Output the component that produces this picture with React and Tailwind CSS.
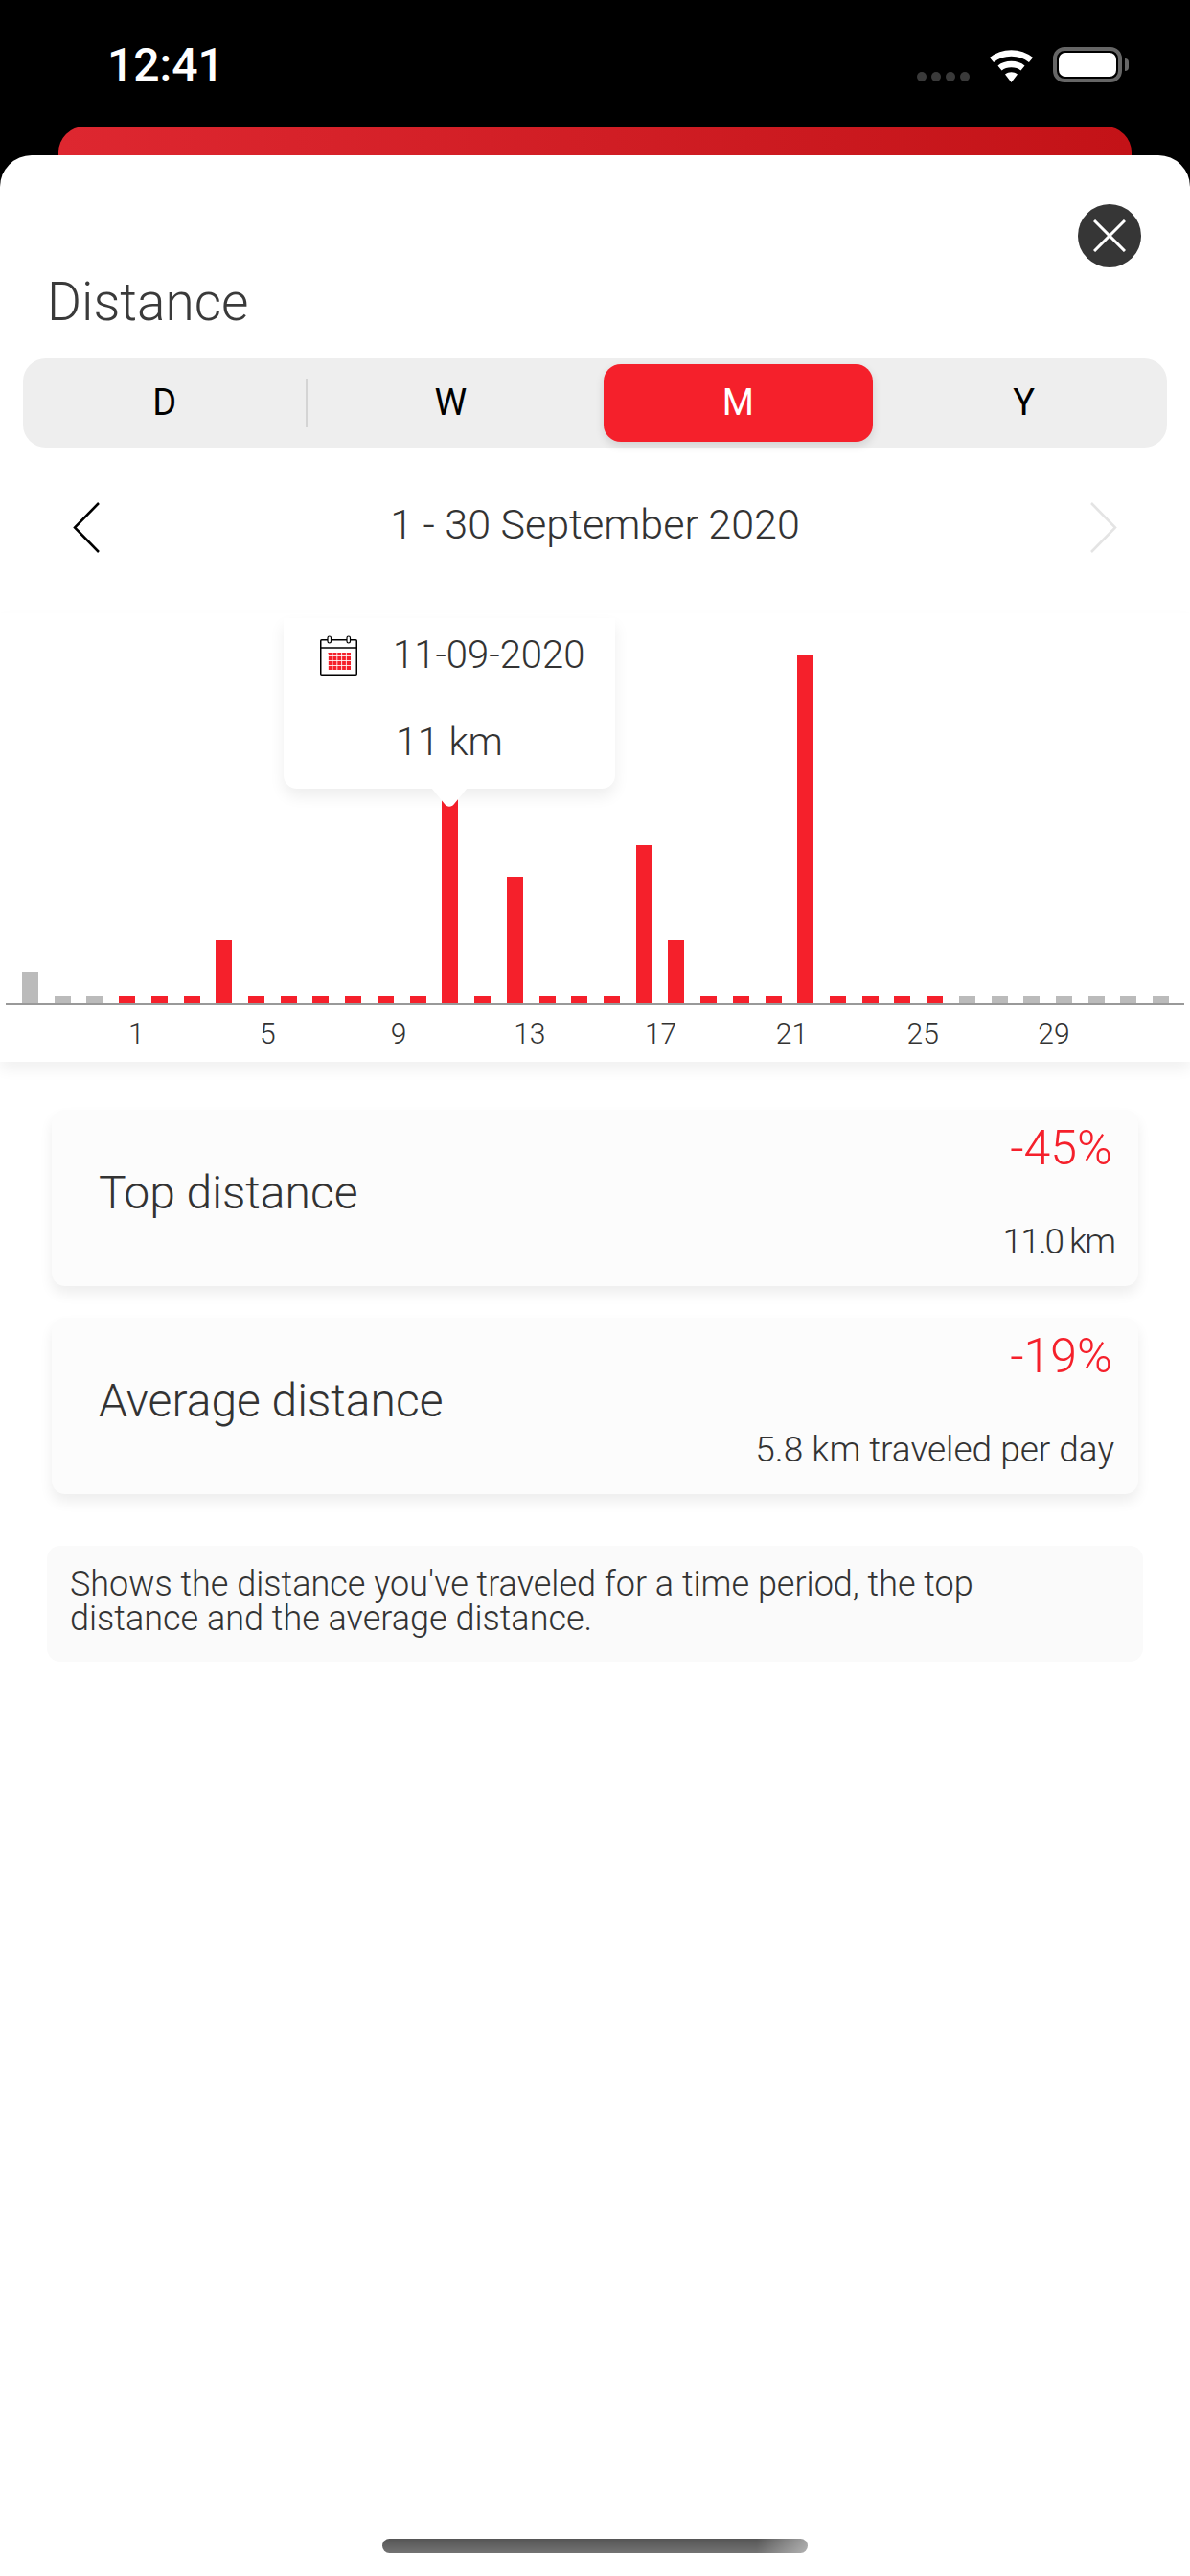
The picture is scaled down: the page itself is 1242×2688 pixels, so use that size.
import React from "react";

const bars = [33, 8, 8, 8, 8, 8, 66, 8, 8, 8, 8, 8, 8, 213, 8, 132, 8, 8, 8, 165, 66, 8, 8, 8, 363, 8, 8, 8, 8, 8, 8, 8, 8, 8, 8, 8];
const labels = [1, 5, 9, 13, 17, 21, 25, 29];
const tabs = ["D", "W", "M", "Y"];

const Wifi = () => (
  <svg width="47" height="35" viewBox="0 0 47 35" fill="none">
    <path d="M3 11.5C14.5 2 32.5 2 44 11.5" stroke="white" strokeWidth="6.5" />
    <path d="M11.5 20C18 14.8 29 14.8 35.5 20" stroke="white" strokeWidth="6.5" />
    <path d="M17 26.5C21 23.6 26 23.6 30 26.5L23.5 35Z" fill="white" />
  </svg>
);

const Battery = () => (
  <div className="flex items-center">
    <div className="w-[72px] h-[37px] rounded-[12px] border-[4px] border-[#666666] p-[2px]">
      <div className="w-full h-full rounded-[7px] bg-white" />
    </div>
    <div className="w-[4px] h-[13px] ml-[3px] rounded-r-[4px] bg-[#666666]" />
  </div>
);

const CalendarIcon = () => (
  <svg width="39" height="42" viewBox="0 0 39 42" fill="none">
    <rect x="0.75" y="4.75" width="37.5" height="36.5" rx="1" stroke="black" strokeWidth="1.5" />
    <path d="M1 13H38" stroke="black" strokeWidth="1.5" />
    <rect x="8" y="1" width="3.5" height="7" rx="1.75" fill="white" stroke="black" strokeWidth="1.2" />
    <rect x="28" y="1" width="3.5" height="7" rx="1.75" fill="white" stroke="black" strokeWidth="1.2" />
    <rect x="8" y="18" width="24" height="18" fill="#f5202b" />
    <path d="M8.5 18.5V36M13 18V36M17.8 18V36M22.6 18V36M27.4 18V36M8 21.5H32M8 26.5H32M8 31.5H32" stroke="white" strokeWidth="1" opacity="0.85" />
  </svg>
);

const StatCard = ({ title, pct, sub, subClass }) => (
  <div className="h-[184px] rounded-[14px] bg-[#fcfcfc] shadow-[0_8px_14px_rgba(0,0,0,0.07)] pl-[49px] pr-[25px] flex items-center justify-between">
    <div className="pb-[10px] text-[48px] leading-[60px] font-light text-[#333333]">{title}</div>
    <div className="h-full flex flex-col items-end justify-between pt-[13px] pb-[24px]">
      <div className="text-[50px] leading-[54px] font-light text-[#f5202b] pr-[2px]">{pct}</div>
      <div className={`text-[37px] leading-[44px] font-light text-[#333333] ${subClass}`}>{sub}</div>
    </div>
  </div>
);

export default function App() {
  return (
    <div className="w-[1242px] h-[2688px] bg-black flex flex-col font-[Roboto,sans-serif] overflow-hidden">
      {/* status bar */}
      <div className="h-[132px] shrink-0 flex justify-between items-start pl-[112px] pr-[64px] pt-[44px]">
        <div className="text-[48px] leading-[48px] font-medium text-white">12:41</div>
        <div className="flex items-end gap-[20px] pt-[5px]">
          <div className="flex gap-[5px] pb-[1px]">
            <div className="w-[10px] h-[10px] rounded-full bg-[#3a3a3a]" />
            <div className="w-[10px] h-[10px] rounded-full bg-[#3a3a3a]" />
            <div className="w-[10px] h-[10px] rounded-full bg-[#3a3a3a]" />
            <div className="w-[10px] h-[10px] rounded-full bg-[#3a3a3a]" />
          </div>
          <Wifi />
          <Battery />
        </div>
      </div>

      {/* card behind the sheet */}
      <div className="h-[30px] shrink-0 mx-[61px] rounded-t-[27px] bg-gradient-to-r from-[#de2730] to-[#c31217]" />

      {/* sheet */}
      <div className="flex-1 bg-white rounded-t-[33px] flex flex-col pt-[51px]">
        <div className="flex justify-end pr-[51px]">
          <button className="w-[66px] h-[66px] rounded-full bg-[#363636] flex items-center justify-center">
            <svg width="34" height="34" viewBox="0 0 34 34" fill="none">
              <path d="M1 1L33 33M33 1L1 33" stroke="white" strokeWidth="3" />
            </svg>
          </button>
        </div>
        <div className="mt-[4px] h-[64px] pl-[49px] text-[55px] leading-[64px] font-light text-[#3a3a3a]">Distance</div>

        {/* period tabs */}
        <div className="relative mt-[27px] mx-[24px] h-[93px] rounded-[24px] bg-[#eeeeee] grid grid-cols-4">
          {tabs.map((t) => (
            <div key={t} className="flex items-center justify-center">
              {t === "M" ? (
                <div className="w-[281px] h-[81px] rounded-[18px] bg-[#f5202b] shadow-[0_4px_10px_rgba(0,0,0,0.12)] flex items-center justify-center text-[38px] text-white">
                  {t}
                </div>
              ) : (
                <span className={t === "Y" ? "text-[38px] text-black" : "pr-[3px] text-[38px] text-black"}>{t}</span>
              )}
            </div>
          ))}
          <div className="absolute left-[295px] top-[21px] w-[2px] h-[51px] bg-[#d4d4d4]" />
        </div>

        {/* date nav */}
        <div className="mt-[50px] h-[60px] px-[76px] flex items-center justify-between">
          <svg className="mt-[7px]" width="28" height="53" viewBox="0 0 28 53" fill="none">
            <path d="M27 1L2 26.5L27 52" stroke="black" strokeWidth="2.5" />
          </svg>
          <div className="text-[43px] leading-[60px] font-light text-[#333333]">1 - 30 September 2020</div>
          <svg className="mt-[7px]" width="28" height="53" viewBox="0 0 28 53" fill="none">
            <path d="M1 1L26 26.5L1 52" stroke="#e4e4e4" strokeWidth="2.5" />
          </svg>
        </div>

        {/* chart */}
        <div className="relative mt-[63px] h-[468px] bg-white shadow-[0_8px_14px_rgba(0,0,0,0.06)] flex flex-col justify-end">
          <div className="flex items-end gap-[16.73px] pl-[23px]">
            {bars.map((h, i) => (
              <div
                key={i}
                className={i < 3 || i > 28 ? "w-[17px] bg-[#bbbbbb]" : "w-[17px] bg-[#f5202b]"}
                style={{ height: h }}
              />
            ))}
          </div>
          <div className="mx-[6px] h-[2px] bg-[#999999]" />
          <div className="h-[59px] pl-[74px] flex items-center">
            {labels.map((l) => (
              <div key={l} className="w-[136.8px] text-center text-[30px] font-light text-[#333333]">{l}</div>
            ))}
          </div>

          {/* tooltip */}
          <div className="absolute left-[296px] top-[5px] w-[346px] h-[178px] bg-white rounded-b-[14px] shadow-[0_8px_16px_rgba(0,0,0,0.07)] pt-[14px]">
            <div className="flex items-center h-[50px] pl-[38px] gap-[37px]">
              <CalendarIcon />
              <span className="text-[40px] leading-[50px] font-light text-[#333333]">11-09-2020</span>
            </div>
            <div className="mt-[40px] text-center text-[41px] leading-[50px] font-light text-[#333333]">11 km</div>
            <svg className="absolute left-[154px] top-[177px]" width="38" height="21" viewBox="0 0 38 21" fill="none">
              <path d="M0 0H38L24 17C21.5 20.5 16.5 20.5 14 17Z" fill="white" />
            </svg>
          </div>
        </div>

        {/* stat cards */}
        <div className="mt-[50px] mx-[54px] flex flex-col gap-[33px]">
          <StatCard title="Top distance" pct="-45%" sub="11.0 km" subClass="tracking-[-2px]" />
          <StatCard title="Average distance" pct="-19%" sub="5.8 km traveled per day" subClass="" />
        </div>

        {/* description */}
        <div className="mt-[54px] mx-[49px] h-[121px] rounded-[14px] bg-[#fafafa] pl-[24px] pr-[120px] pt-[22px] text-[36px] leading-[36px] font-light text-[#333333]">
          Shows the distance you've traveled for a time period, the top distance and the average distance.
        </div>

        {/* home indicator */}
        <div className="mt-auto mb-[24px] ml-[399px] w-[444px] h-[15px] rounded-[8px] bg-[linear-gradient(to_right,transparent_88%,rgba(255,255,255,0.45)),linear-gradient(to_bottom,#555555,#737373)]" />
      </div>
    </div>
  );
}
